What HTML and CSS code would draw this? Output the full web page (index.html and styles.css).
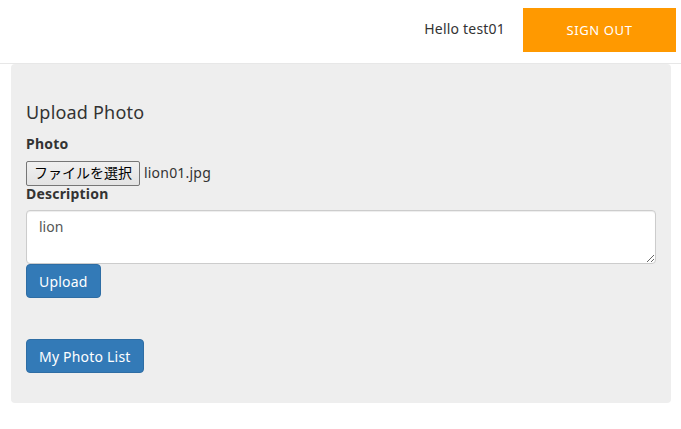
FILE: index.html
```html
<!DOCTYPE html>
<html lang="ja">
<head>
<meta charset="utf-8">
<title>Upload Photo</title>
<link rel="stylesheet" href="styles.css">
</head>
<body>
<header class="topbar">
  <span class="hello">Hello test01</span>
  <button class="signout">SIGN OUT</button>
</header>
<main class="page">
  <section class="well">
    <h3 class="title">Upload Photo</h3>
    <label class="label">Photo</label>
    <div class="file">
      <span class="file-btn">ファイルを選択</span>
      <span class="file-name">lion01.jpg</span>
    </div>
    <label class="label">Description</label>
    <textarea class="desc">lion</textarea>
    <div><button class="btn">Upload</button></div>
    <div class="list-row"><button class="btn">My Photo List</button></div>
  </section>
</main>
</body>
</html>
```

FILE: styles.css
```css
* { box-sizing: border-box; }
html, body { margin: 0; padding: 0; background: #fff; }
body {
  font-family: "Noto Sans", "Noto Sans CJK JP", sans-serif;
  font-size: 14px;
  line-height: 20px;
  color: #333;
  letter-spacing: 0.2px;
}
.topbar {
  height: 64px;
  border-bottom: 1px solid #e7e7e7;
  display: flex;
  align-items: flex-start;
  justify-content: flex-end;
  padding: 8px 5px 0 0;
}
.hello {
  margin-top: 11px;
  margin-right: 18px;
  color: #333;
}
.signout {
  width: 153px;
  height: 44px;
  background: #ff9900;
  color: #fff;
  border: none;
  font-family: inherit;
  font-size: 13px;
  letter-spacing: 0.6px;
  padding: 0;
}
.page {
  padding: 0 10px 0 11px;
}
.well {
  background: #eeeeee;
  border-radius: 4px;
  padding: 36px 15px 30px;
  display: flex;
  flex-direction: column;
  align-items: flex-start;
}
.title {
  margin: 0 0 10px;
  font-size: 18px;
  font-weight: 400;
  line-height: 24px;
  color: #333;
}
.label {
  font-weight: 700;
  margin-bottom: 6px;
}
.file {
  display: flex;
  align-items: center;
  height: 26px;
  margin-bottom: -2px;
}
.file-btn {
  display: inline-flex;
  align-items: center;
  justify-content: center;
  width: 114px;
  height: 25px;
  padding: 0;
  border: 1px solid #767676;
  border-radius: 2px;
  background: linear-gradient(#f0f0f0, #e3e3e3);
  font-size: 14px;
  letter-spacing: 0;
  color: #000;
}
.file-name {
  margin-left: 4px;
  font-size: 14px;
  color: #333;
}
.desc {
  width: 100%;
  height: 54px;
  margin: 0;
  padding: 6px 12px;
  border: 1px solid #ccc;
  border-radius: 4px;
  background: #fff;
  font-family: inherit;
  font-size: 14px;
  line-height: 20px;
  color: #555;
  box-shadow: inset 0 1px 1px rgba(0,0,0,.075);
  display: block;
}
.btn {
  height: 34px;
  padding: 0 12px;
  border: 1px solid #2e6da4;
  border-radius: 4px;
  background: #337ab7;
  color: #fff;
  font-family: inherit;
  font-size: 14px;
  letter-spacing: 0.2px;
  display: block;
}
.list-row {
  margin-top: 41px;
}
```
